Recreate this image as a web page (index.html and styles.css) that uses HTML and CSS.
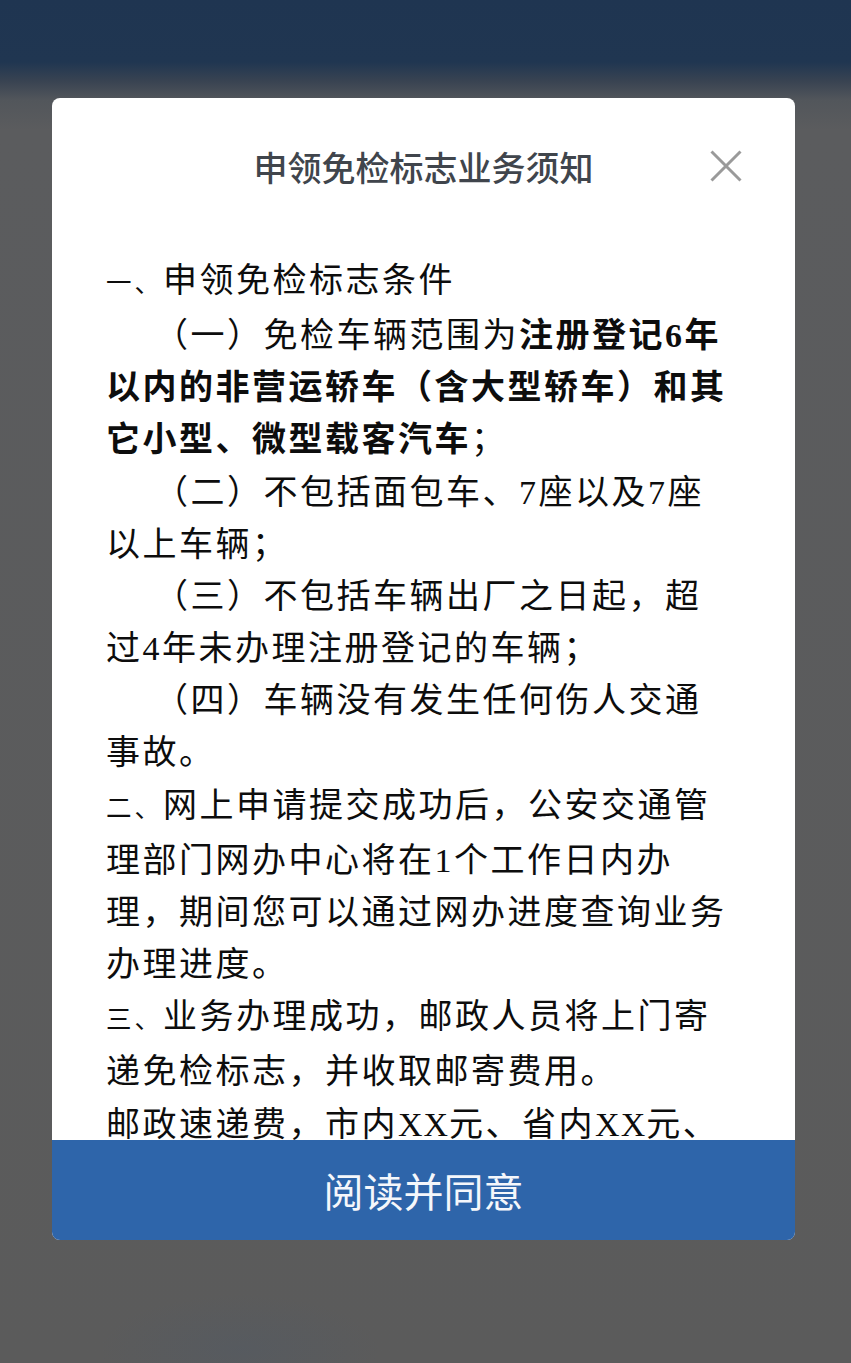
FILE: index.html
```html
<!DOCTYPE html>
<html lang="zh-CN">
<head>
<meta charset="utf-8">
<title>申领免检标志业务须知</title>
<link rel="stylesheet" href="styles.css">
</head>
<body>
<div class="screen">
  <div class="modal">
    <div class="modal-header">
      <span class="spacer"></span>
      <h1 class="modal-title">申领免检标志业务须知</h1>
      <button class="close-btn" aria-label="关闭">
        <svg width="32" height="32" viewBox="0 0 32 32"><path d="M1.5 1.5 L30.5 30.5 M30.5 1.5 L1.5 30.5" stroke="#9a9a9a" stroke-width="3" fill="none"/></svg>
      </button>
    </div>
    <div class="modal-body">
      <p class="line"><span class="num">一、</span>申领免检标志条件</p>
      <p class="line indent">（一）免检车辆范围为<b>注册登记6年以内的非营运轿车（含大型轿车）和其它小型、微型载客汽车</b>；</p>
      <p class="line indent">（二）不包括面包车、7座以及7座以上车辆；</p>
      <p class="line indent">（三）不包括车辆出厂之日起，超过4年未办理注册登记的车辆；</p>
      <p class="line indent">（四）车辆没有发生任何伤人交通事故。</p>
      <p class="line"><span class="num">二、</span>网上申请提交成功后，公安交通管理部门网办中心将在1个工作日内办理，期间您可以通过网办进度查询业务办理进度。</p>
      <p class="line"><span class="num">三、</span>业务办理成功，邮政人员将上门寄递免检标志，并收取邮寄费用。</p>
      <p class="line">邮政速递费，市内<span class="latin">XX</span>元、省内<span class="latin">XX</span>元、省外<span class="latin">XX</span>元。</p>
    </div>
    <button class="agree-btn">阅读并同意</button>
  </div>
</div>
</body>
</html>
```
FILE: styles.css
```css
html, body {
  margin: 0;
  padding: 0;
}
body {
  width: 851px;
  height: 1363px;
  overflow: hidden;
  background:
    radial-gradient(ellipse 140px 55px at 240px 1350px, rgba(82, 90, 100, 0.5), rgba(82, 90, 100, 0) 100%),
    linear-gradient(to bottom, #1f3551 0px, #203651 62px, #3a4452 82px, #52565b 100px, #5b5c5e 130px, #5b5b5b 100%);
  font-family: "Liberation Serif", "Noto Sans CJK SC", serif;
}
.screen {
  box-sizing: border-box;
  height: 1363px;
  padding: 98px 56px 0 52px;
}
.modal {
  width: 743px;
  height: 1142px;
  background: #fff;
  border-radius: 8px;
  overflow: hidden;
  display: flex;
  flex-direction: column;
}
.modal-header {
  flex: none;
  height: 136px;
  display: grid;
  grid-template-columns: 1fr auto 1fr;
  align-items: center;
}
.modal-title {
  margin: 0;
  font-family: "Noto Sans CJK SC", sans-serif;
  font-weight: 500;
  font-size: 34px;
  line-height: 40px;
  color: #40454c;
  padding-top: 2px;
}
.close-btn {
  justify-self: end;
  margin-right: 53px;
  padding: 0;
  border: 0;
  background: none;
  width: 32px;
  height: 32px;
  display: block;
}
.close-btn svg {
  display: block;
}
.modal-body {
  flex: 1;
  min-height: 0;
  overflow: hidden;
  padding: 21px 64px 0 54px;
  color: #0d0d0d;
  font-size: 34px;
  letter-spacing: 2.5px;
  line-height: 52.15px;
}
.line {
  margin: 0;
}
.indent {
  text-indent: 48px;
}
.line b {
  font-weight: 700;
}
.num {
  font-size: 25.5px;
  letter-spacing: 3px;
}
.latin {
  letter-spacing: 1px;
}
.agree-btn {
  flex: none;
  height: 100px;
  border: 0;
  margin: 0;
  padding: 0;
  background: #2e65aa;
  color: #f5f7fb;
  font-family: "Noto Sans CJK SC", sans-serif;
  font-size: 40px;
  line-height: 100px;
  text-align: center;
}
```
